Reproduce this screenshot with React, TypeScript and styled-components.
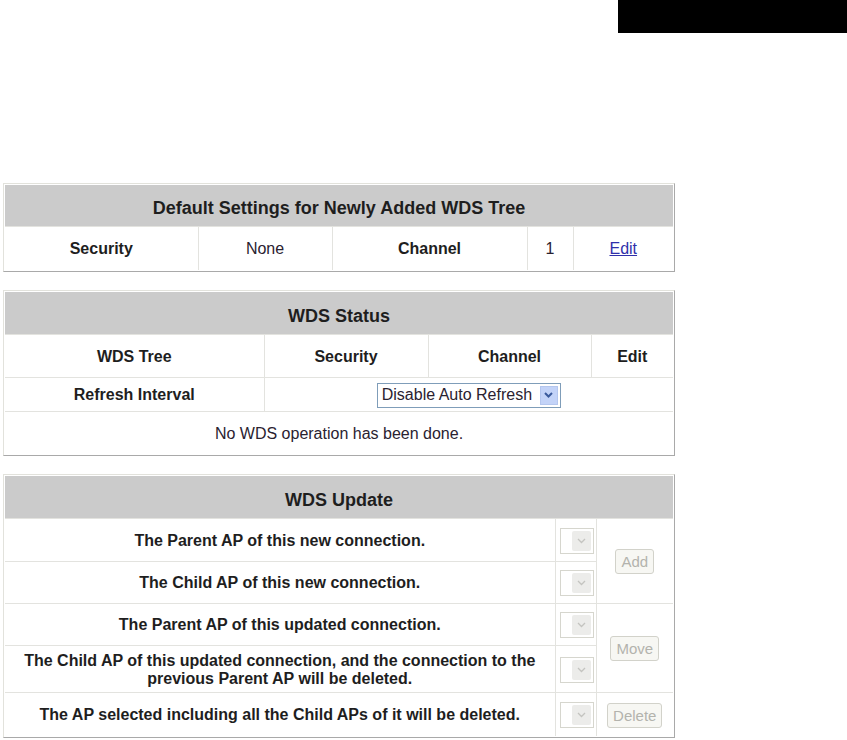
import styled, { createGlobalStyle } from 'styled-components'

const GlobalStyle = createGlobalStyle`
  html, body {
    margin: 0;
    padding: 0;
    background: #ffffff;
  }
  body {
    font-family: 'Liberation Sans', Arial, sans-serif;
    color: #222222;
  }
`

const Page = styled.div`
  width: 847px;
  min-height: 740px;
  display: flex;
  flex-direction: column;
`

const TopBar = styled.div`
  display: flex;
  justify-content: flex-end;
`

const BlackTab = styled.div`
  width: 229px;
  height: 33px;
  background: #000000;
`

const Content = styled.div`
  display: flex;
  flex-direction: column;
  gap: 18px;
  padding: 150px 0 0 3px;
`

const Frame = styled.div`
  width: 668px;
  padding: 1px;
  border: 1px solid;
  border-color: #e2e2dc #a9a9a9 #a9a9a9 #e2e2dc;
`

const Table = styled.table`
  width: 668px;
  border-collapse: collapse;
  table-layout: fixed;
  font-size: 16px;
`

const Col = styled.col<{ $w: number }>`
  width: ${(p) => p.$w}px;
`

const Row = styled.tr<{ $h: number }>`
  height: ${(p) => p.$h}px;
`

const HeadCell = styled.th`
  background: #cbcbcb;
  font-size: 18px;
  font-weight: bold;
  color: #1e1e1e;
  text-align: center;
  vertical-align: middle;
  padding: 7px 0 0;
`

const Cell = styled.td<{ $bold?: boolean }>`
  border: 1px solid #e3e3df;
  border-bottom: none;
  text-align: center;
  vertical-align: middle;
  padding: 2px 4px 0;
  font-weight: ${(p) => (p.$bold ? 'bold' : 'normal')};
  color: ${(p) => (p.$bold ? '#1e1e1e' : '#2a2230')};
  line-height: 18px;

  &:first-child {
    border-left: none;
  }
  &:last-child {
    border-right: none;
  }
`

const EditLink = styled.a`
  color: #3030aa;
  text-decoration: underline;
  cursor: pointer;
`

const RefreshSelect = styled.div`
  display: inline-flex;
  align-items: center;
  height: 25px;
  width: 184px;
  border: 1px solid #7f9db9;
  background: #fff;
  box-sizing: border-box;
  vertical-align: middle;
`

const SelectText = styled.span`
  flex: 1;
  text-align: left;
  padding-left: 4px;
  font-size: 16px;
  color: #2a2230;
  white-space: nowrap;
`

const BlueArrow = styled.span`
  width: 18px;
  height: 19px;
  margin-right: 2px;
  background: #c3d3f8;
  border: 1px solid #b4c6ee;
  display: flex;
  align-items: center;
  justify-content: center;
  box-sizing: border-box;
`

const DisabledSelect = styled.div`
  display: inline-flex;
  width: 34px;
  height: 26px;
  border: 1px solid #d6d6ce;
  background: #fff;
  box-sizing: border-box;
  padding: 2px;
  vertical-align: middle;
`

const DisabledArrow = styled.span`
  margin-left: auto;
  width: 19px;
  background: #ececea;
  border-radius: 2px;
  display: flex;
  align-items: center;
  justify-content: center;
`

const DisabledButton = styled.button`
  font-family: 'Liberation Sans', Arial, sans-serif;
  font-size: 15px;
  color: #b3b3ad;
  background: #f7f7f3;
  border: 1px solid #d2d2ca;
  border-radius: 3px;
  height: 25px;
  padding: 0 5px;
  cursor: default;
`

const Chevron = ({ color, bold }: { color: string; bold?: boolean }) => (
  <svg width="9" height="6" viewBox="0 0 9 6">
    <path d="M1 1 L4.5 4.5 L8 1" fill="none" stroke={color} strokeWidth={bold ? 2 : 1.3} />
  </svg>
)

const ApSelect = () => (
  <DisabledSelect>
    <DisabledArrow>
      <Chevron color="#c4c4c0" />
    </DisabledArrow>
  </DisabledSelect>
)

const DefaultSettings = () => (
  <Frame>
    <Table>
      <colgroup>
        <Col $w={193} />
        <Col $w={134} />
        <Col $w={195} />
        <Col $w={46} />
        <Col $w={100} />
      </colgroup>
      <thead>
        <Row $h={41}>
          <HeadCell colSpan={5}>Default Settings for Newly Added WDS Tree</HeadCell>
        </Row>
      </thead>
      <tbody>
        <Row $h={44}>
          <Cell $bold>Security</Cell>
          <Cell>None</Cell>
          <Cell $bold>Channel</Cell>
          <Cell>1</Cell>
          <Cell>
            <EditLink>Edit</EditLink>
          </Cell>
        </Row>
      </tbody>
    </Table>
  </Frame>
)

const WdsStatus = () => (
  <Frame>
    <Table>
      <colgroup>
        <Col $w={259} />
        <Col $w={164} />
        <Col $w={163} />
        <Col $w={82} />
      </colgroup>
      <thead>
        <Row $h={42}>
          <HeadCell colSpan={4}>WDS Status</HeadCell>
        </Row>
      </thead>
      <tbody>
        <Row $h={43}>
          <Cell $bold>WDS Tree</Cell>
          <Cell $bold>Security</Cell>
          <Cell $bold>Channel</Cell>
          <Cell $bold>Edit</Cell>
        </Row>
        <Row $h={34}>
          <Cell $bold>Refresh Interval</Cell>
          <Cell colSpan={3}>
            <RefreshSelect>
              <SelectText>Disable Auto Refresh</SelectText>
              <BlueArrow>
                <Chevron color="#3a5a9c" bold />
              </BlueArrow>
            </RefreshSelect>
          </Cell>
        </Row>
        <Row $h={43}>
          <Cell colSpan={4}>No WDS operation has been done.</Cell>
        </Row>
      </tbody>
    </Table>
  </Frame>
)

const WdsUpdate = () => (
  <Frame>
    <Table>
      <colgroup>
        <Col $w={550} />
        <Col $w={41} />
        <Col $w={77} />
      </colgroup>
      <thead>
        <Row $h={42}>
          <HeadCell colSpan={3}>WDS Update</HeadCell>
        </Row>
      </thead>
      <tbody>
        <Row $h={43}>
          <Cell $bold>The Parent AP of this new connection.</Cell>
          <Cell><ApSelect /></Cell>
          <Cell rowSpan={2}>
            <DisabledButton disabled>Add</DisabledButton>
          </Cell>
        </Row>
        <Row $h={42}>
          <Cell $bold>The Child AP of this new connection.</Cell>
          <Cell><ApSelect /></Cell>
        </Row>
        <Row $h={42}>
          <Cell $bold>The Parent AP of this updated connection.</Cell>
          <Cell><ApSelect /></Cell>
          <Cell rowSpan={2}>
            <DisabledButton disabled>Move</DisabledButton>
          </Cell>
        </Row>
        <Row $h={47}>
          <Cell $bold>
            The Child AP of this updated connection, and the connection to the
            <br />
            previous Parent AP will be deleted.
          </Cell>
          <Cell><ApSelect /></Cell>
        </Row>
        <Row $h={44}>
          <Cell $bold>The AP selected including all the Child APs of it will be deleted.</Cell>
          <Cell><ApSelect /></Cell>
          <Cell>
            <DisabledButton disabled>Delete</DisabledButton>
          </Cell>
        </Row>
      </tbody>
    </Table>
  </Frame>
)

const App = () => (
  <>
    <GlobalStyle />
    <Page>
      <TopBar>
        <BlackTab />
      </TopBar>
      <Content>
        <DefaultSettings />
        <WdsStatus />
        <WdsUpdate />
      </Content>
    </Page>
  </>
)

export default App
